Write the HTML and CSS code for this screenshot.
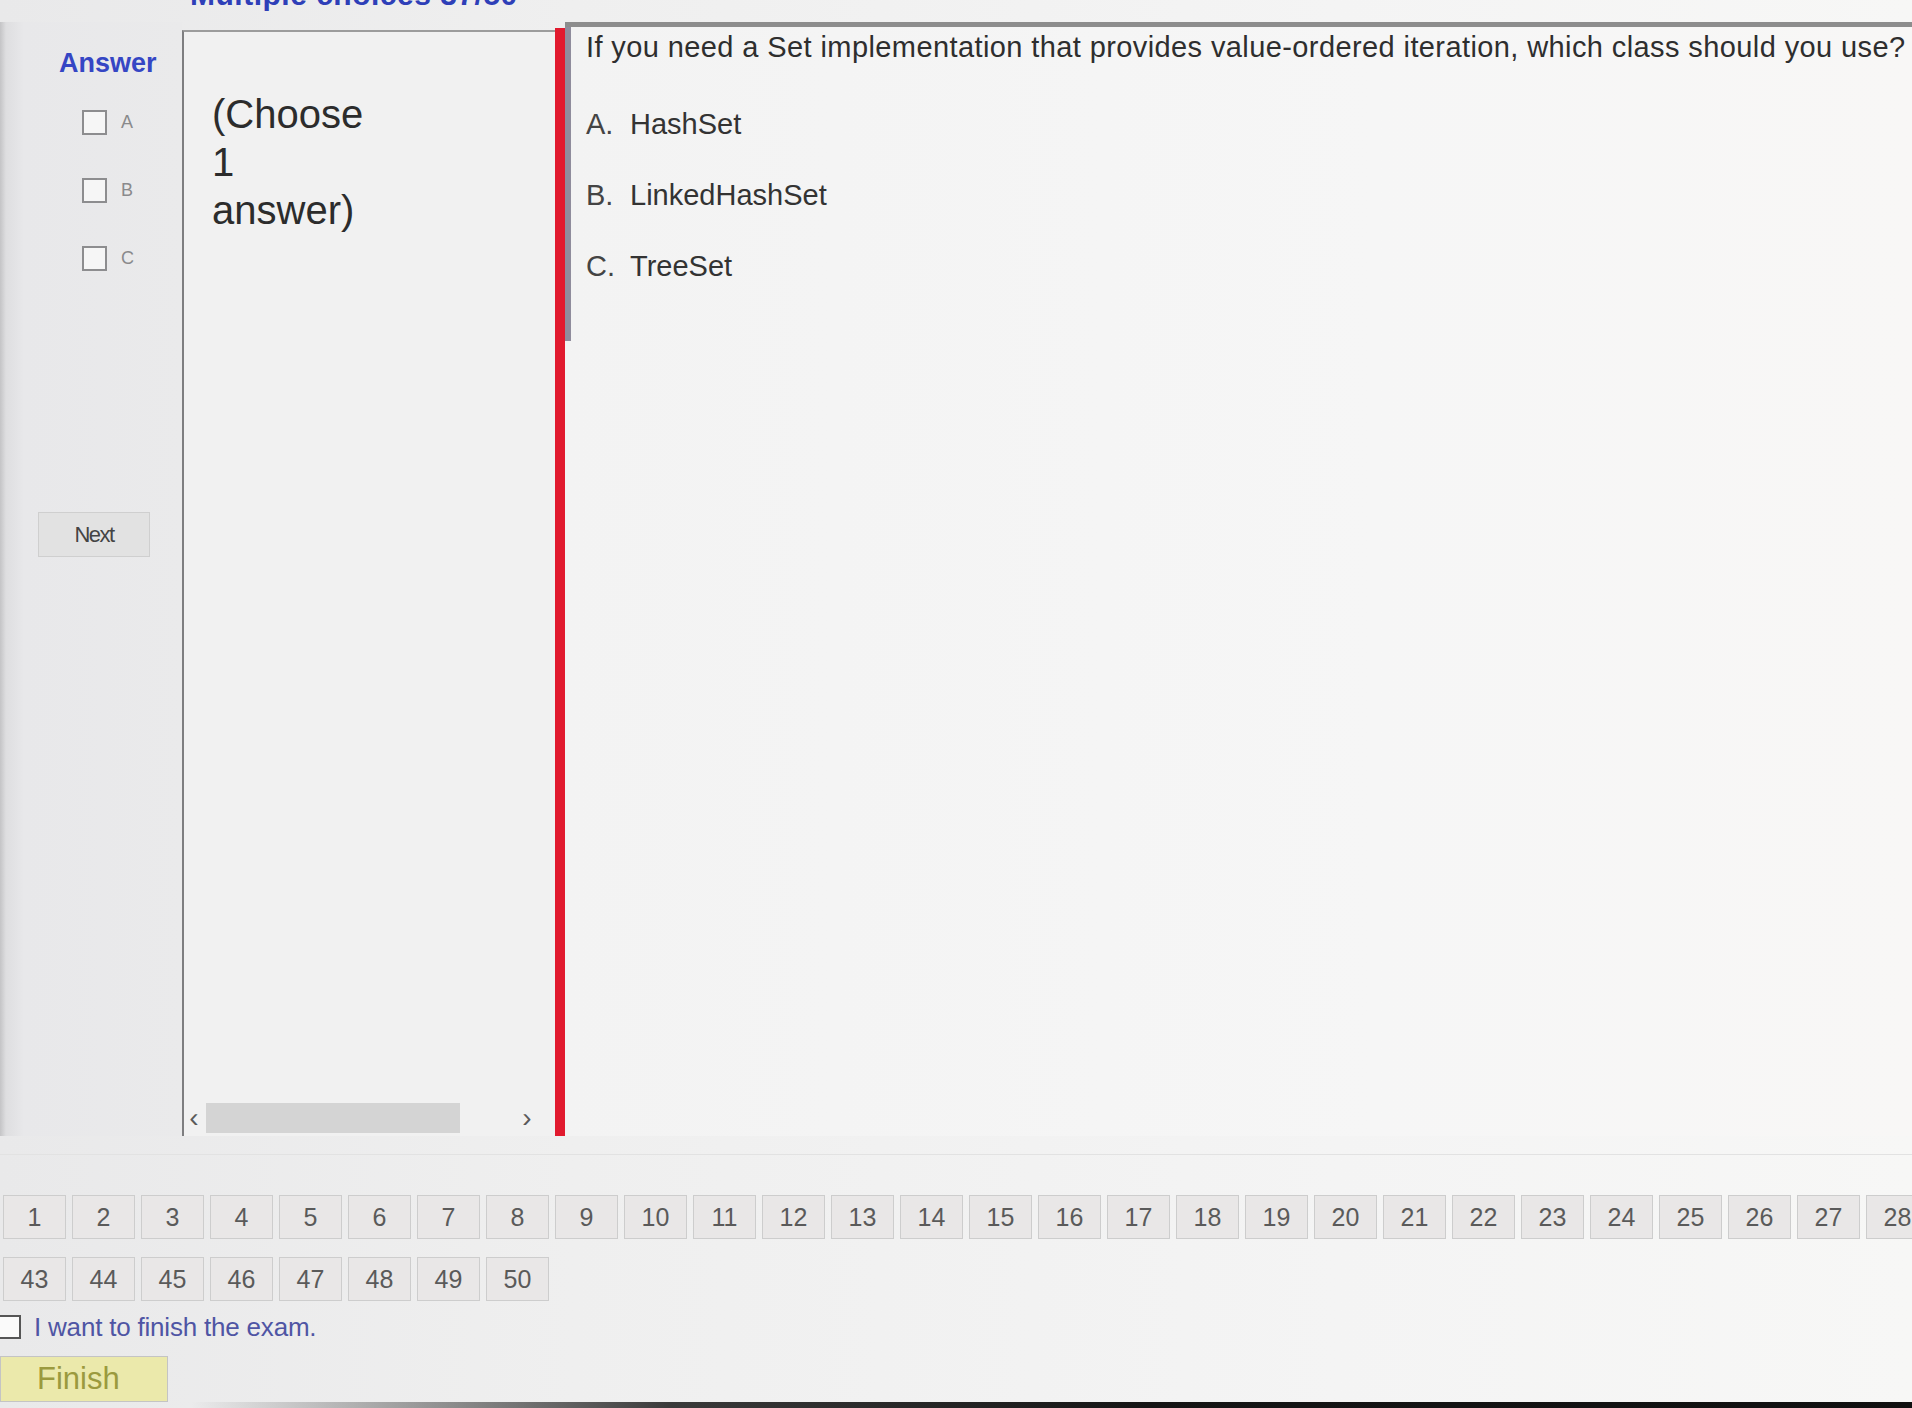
FILE: index.html
```html
<!DOCTYPE html>
<html lang="en">
<head>
<meta charset="utf-8">
<title>Multiple choices 37/50</title>
<link rel="stylesheet" href="styles.css">
</head>
<body>
<div class="page">
  <h1 class="title">Multiple choices 37/50</h1>
  <div class="main">
    <aside class="side">
      <div class="answer-head">Answer</div>
      <ul class="answers">
        <li><span class="box"></span><span class="letter">A</span></li>
        <li><span class="box"></span><span class="letter">B</span></li>
        <li><span class="box"></span><span class="letter">C</span></li>
      </ul>
      <button class="next">Next</button>
    </aside>
    <section class="hint">
      <p class="hint-text">(Choose<br>1<br>answer)</p>
      <div class="hscroll">
        <span class="arrow">&#8249;</span>
        <span class="thumb"></span>
        <span class="arrow right">&#8250;</span>
      </div>
    </section>
    <div class="splitter"></div>
    <section class="question">
      <div class="vscroll"></div>
      <div class="q-body">
        <p class="q-text">If you need a Set implementation that provides value-ordered iteration, which class should you use?</p>
        <ol class="options">
          <li><span class="opt-letter">A.</span>HashSet</li>
          <li><span class="opt-letter">B.</span>LinkedHashSet</li>
          <li><span class="opt-letter">C.</span>TreeSet</li>
        </ol>
      </div>
    </section>
  </div>
  <div class="divider"></div>
  <nav class="qnav">
    <button>1</button><button>2</button><button>3</button><button>4</button><button>5</button><button>6</button><button>7</button><button>8</button><button>9</button><button>10</button><button>11</button><button>12</button><button>13</button><button>14</button><button>15</button><button>16</button><button>17</button><button>18</button><button>19</button><button>20</button><button>21</button><button>22</button><button>23</button><button>24</button><button>25</button><button>26</button><button>27</button><button>28</button><button>29</button><button>30</button><button>31</button><button>32</button><button>33</button><button>34</button><button>35</button><button>36</button><button>37</button><button>38</button><button>39</button><button>40</button><button>41</button><button>42</button><button>43</button><button>44</button><button>45</button><button>46</button><button>47</button><button>48</button><button>49</button><button>50</button>
  </nav>
  <label class="finish-check"><span class="box"></span>I want to finish the exam.</label>
  <button class="finish">Finish</button>
  <div class="bezel"></div>
</div>
</body>
</html>
```
FILE: styles.css
```css
html, body {
  margin: 0;
  padding: 0;
}
body {
  font-family: "Liberation Sans", Arial, sans-serif;
  background: #eeeeee;
  color: #333;
}
.page {
  width: 1912px;
  height: 1408px;
  overflow: hidden;
  background: linear-gradient(to right, #e9e9ea 0, #efefef 30%, #f4f4f4 70%, #f7f7f6 100%);
}
.title {
  margin: -20px 0 0 190px;
  font-size: 30px;
  line-height: 30px;
  font-weight: bold;
  color: #2e3fb8;
  letter-spacing: 0.5px;
}
.main {
  display: flex;
  margin-top: 12px;
  height: 1114px;
}
.side {
  width: 182px;
  flex: none;
  background: linear-gradient(to right, #c4c4c6 0, #dedee0 6px, #e8e8ea 24px, #eaeaeb 100%);
}
.answer-head {
  margin: 26px 0 0 59px;
  font-size: 27px;
  line-height: 30px;
  font-weight: bold;
  color: #3546c4;
}
.answers {
  list-style: none;
  margin: 10px 0 0;
  padding: 0 0 0 82px;
}
.answers li {
  height: 68px;
  display: flex;
  align-items: center;
  gap: 14px;
}
.box {
  display: inline-block;
  width: 21px;
  height: 21px;
  border: 2px solid #8d8d8f;
  background: #f6f6f6;
  box-sizing: content-box;
}
.letter {
  font-size: 18px;
  color: #8a8a8c;
}
.next {
  display: block;
  margin: 220px 0 0 38px;
  width: 112px;
  height: 45px;
  border: 1px solid #cfcfcf;
  background: #e2e2e2;
  font-family: "Liberation Sans", Arial, sans-serif;
  font-size: 22px;
  letter-spacing: -1.5px;
  color: #444;
  padding: 0;
}
.hint {
  width: 371px;
  flex: none;
  margin-top: 8px;
  border-left: 2px solid #7e7e80;
  border-top: 2px solid #9c9c9c;
  background: #f1f1f1;
  display: flex;
  flex-direction: column;
}
.hint-text {
  margin: 58px 0 0 28px;
  font-size: 40px;
  line-height: 48px;
  color: #2c2c2c;
}
.hscroll {
  margin-top: auto;
  margin-bottom: 2px;
  height: 32px;
  display: flex;
  align-items: center;
}
.arrow {
  width: 20px;
  text-align: center;
  font-size: 28px;
  color: #5a5a5a;
  line-height: 26px;
}
.arrow.right {
  margin-left: auto;
  margin-right: 18px;
}
.thumb {
  margin-left: 2px;
  width: 254px;
  height: 30px;
  background: #d4d4d4;
}
.splitter {
  width: 10px;
  flex: none;
  margin-top: 6px;
  background: #e11a2e;
}
.question {
  flex: 1;
  display: flex;
  border-top: 5px solid #8d8d8d;
  background: linear-gradient(to right, #f3f3f3, #f6f6f6 60%, #f8f7f6);
}
.vscroll {
  width: 6px;
  flex: none;
  height: 314px;
  background: #8f8c9c;
}
.q-body {
  padding: 3px 0 0 15px;
}
.q-text {
  margin: 0;
  font-size: 29px;
  letter-spacing: 0.4px;
  line-height: 34px;
  color: #2e2e2e;
  white-space: nowrap;
}
.options {
  list-style: none;
  margin: 43px 0 0;
  padding: 0;
}
.options li {
  font-size: 29px;
  line-height: 34px;
  color: #333;
  margin-bottom: 37px;
  display: flex;
}
.opt-letter {
  width: 44px;
  color: #444;
}
.divider {
  height: 18px;
  border-bottom: 1px solid #e2e2e2;
}
.qnav {
  margin-top: 40px;
  width: 2920px;
  padding-left: 3px;
  display: flex;
  flex-wrap: wrap;
  gap: 18px 6px;
}
.qnav button {
  width: 63px;
  height: 44px;
  padding: 0;
  border: 1px solid #cdcdcd;
  background: #e9e7e7;
  font-family: "Liberation Sans", Arial, sans-serif;
  font-size: 25px;
  color: #5a5a5a;
}
.finish-check {
  display: flex;
  align-items: center;
  gap: 13px;
  margin: 13px 0 0 -2px;
  height: 26px;
  font-size: 26px;
  letter-spacing: -0.2px;
  color: #4f55a4;
}
.finish-check .box {
  width: 19px;
  height: 20px;
  border-color: #555;
  background: #fafafa;
}
.finish {
  display: block;
  margin-top: 16px;
  width: 168px;
  height: 46px;
  padding: 0 0 0 36px;
  text-align: left;
  border: 1px solid #c4c4c4;
  background: #ebe9ab;
  font-family: "Liberation Sans", Arial, sans-serif;
  font-size: 31px;
  color: #9b9a3e;
}
.bezel {
  height: 6px;
  background: linear-gradient(to right, rgba(40,40,40,0) 10%, #3a3a3a 35%, #151515 60%, #101010 100%);
}
```
